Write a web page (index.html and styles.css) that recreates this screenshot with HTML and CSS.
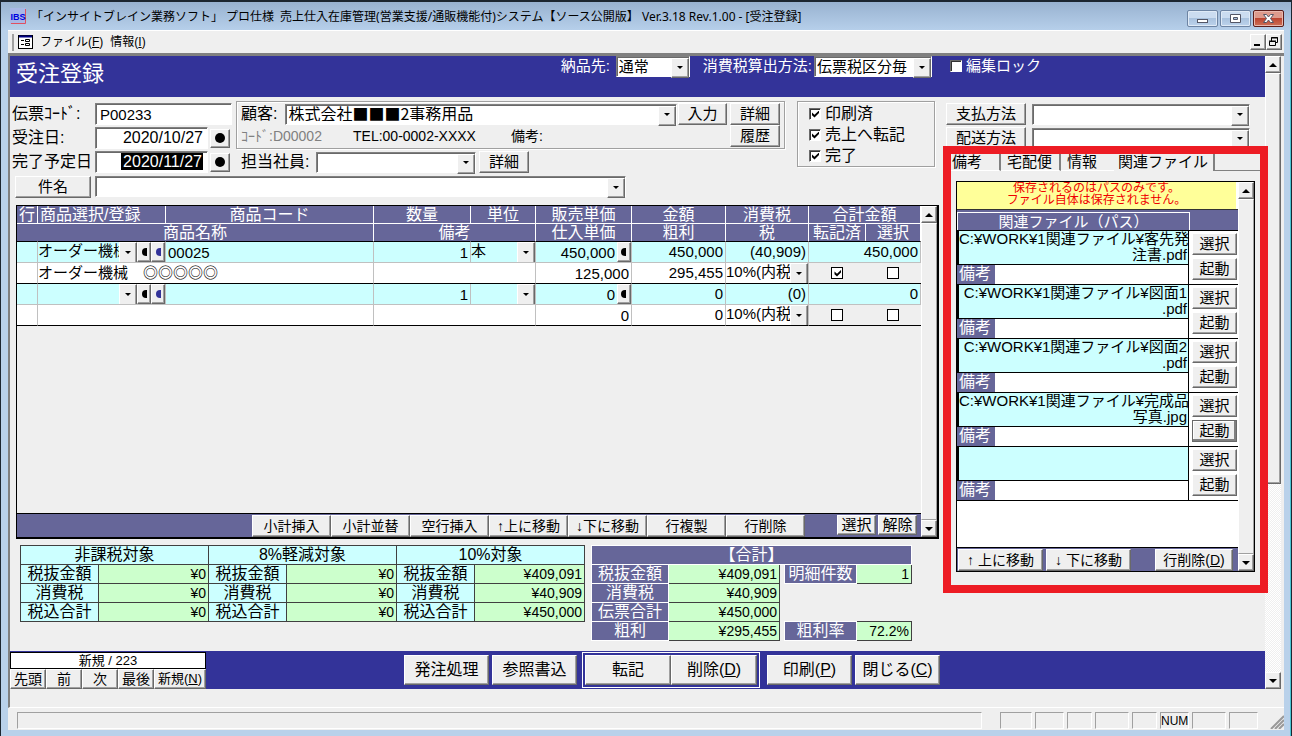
FILE: index.html
```html
<!DOCTYPE html>
<html lang="ja">
<head>
<meta charset="utf-8">
<title>受注登録</title>
<link rel="stylesheet" href="styles.css">
</head>
<body>
<div class="window">
  <header class="titlebar">
    <svg class="logo" viewBox="0 0 16 16" width="16" height="16"><rect width="16" height="16" fill="#a9b8e6"/><path d="M15.500 1v14.500H1" fill="none" stroke="#e05060"/><text x="8" y="12" text-anchor="middle" class="logo-text">IBS</text></svg>
    <span class="title">「インサイトブレイン業務ソフト」 プロ仕様&ensp;売上仕入在庫管理(営業支援/通販機能付)システム【ソース公開版】 Ver.3.18 Rev.1.00 - [受注登録]</span>
    <button class="caption" aria-label="最小化"><svg width="31" height="16" viewBox="0 0 31 16"><rect x="10.500" y="8.500" width="10" height="3" fill="#fff" stroke="#535666"/></svg></button>
    <button class="caption" aria-label="元に戻す"><svg width="31" height="16" viewBox="0 0 31 16"><path d="M10.500 3.500h10v8h-10zM13.500 6.500h4v2h-4z" fill="#fff" fill-rule="evenodd" stroke="#535666"/></svg></button>
    <button class="caption close" aria-label="閉じる"><svg width="31" height="16" viewBox="0 0 31 16"><path d="M10.500 3.500h3l2 2.500 2-2.500h3l-3 4 3 4h-3l-2-2.500-2 2.500h-3l3-4z" fill="#fff" stroke="#535666"/></svg></button>
  </header>

  <div class="client">
    <nav class="menubar">
      <span class="grip"></span>
      <svg width="15" height="14" viewBox="0 0 15 14"><rect x=".5" y=".5" width="14" height="13" fill="#fff" stroke="#000"/><path d="M1 1.500h13" stroke="#000080" stroke-width="2"/><path d="M3 5.500h3M3 9.500h3" stroke="#000"/><path d="M7.500 4.500h4v2h-4zM7.500 8.500h4v2h-4z" fill="none" stroke="#000"/></svg>
      <button class="menu">ファイル(<u>F</u>)</button>
      <button class="menu">情報(<u>I</u>)</button>
      <span class="mdi">
        <button class="btn mdi-btn" aria-label="最小化"><svg width="12" height="12" viewBox="0 0 12 12"><path d="M2 9h6" stroke="#000" stroke-width="2"/></svg></button>
        <button class="btn mdi-btn" aria-label="元に戻す"><svg width="12" height="12" viewBox="0 0 12 12"><path d="M3.500 5V1.500h6v5H8M3 2h7M1.500 5.500h6v4h-6zM1 5h7" fill="none" stroke="#000"/></svg></button>
      </span>
    </nav>

    <div class="form-frame">
      <main class="form">
        <div class="form-head">
          <h1>受注登録</h1>
          <label for="dest">納品先:</label>
          <span class="combo w-dest"><select id="dest"><option>通常</option></select></span>
          <label for="taxcalc">消費税算出方法:</label>
          <span class="combo w-calc"><select id="taxcalc"><option>伝票税区分毎</option></select></span>
          <label class="check lock"><input type="checkbox">編集ロック</label>
        </div>

        <div class="columns">
          <div class="left">
            <section class="top">
              <div class="top-main">
                <div class="ids">
                  <label for="slip">伝票ｺｰﾄﾞ:</label><input class="field wide" id="slip" value="P00233">
                  <label for="odate">受注日:</label><input class="field date" id="odate" value="2020/10/27"><button class="btn dot" aria-label="受注日を選択"></button>
                  <label for="ddate">完了予定日</label><div class="field date"><input class="bare picked" id="ddate" value="2020/11/27" size="10"></div><button class="btn dot" aria-label="完了予定日を選択"></button>
                </div>
                <div class="customer">
                  <div class="group cust-group">
                    <div class="line">
                      <label for="cust">顧客:</label>
                      <span class="combo grow"><select id="cust" class="cjk"><option>株式会社■■■2事務用品</option></select></span>
                      <button class="btn">入力</button>
                    </div>
                    <div class="line small">
                      <span class="dim">ｺｰﾄﾞ:D00002</span><span class="tel">TEL:00-0002-XXXX</span><span>備考:</span>
                    </div>
                    <div class="stack">
                      <button class="btn">詳細</button>
                      <button class="btn">履歴</button>
                    </div>
                  </div>
                  <div class="staff">
                    <label for="staff">担当社員:</label>
                    <span class="combo w-staff"><select id="staff"><option></option></select></span>
                    <button class="btn">詳細</button>
                  </div>
                </div>
                <div class="subject">
                  <button class="btn" id="subj">件名</button>
                  <span class="combo w-subject"><select aria-labelledby="subj"><option></option></select></span>
                </div>
              </div>
              <div class="group flags">
                <label class="check"><input type="checkbox" checked>印刷済</label>
                <label class="check"><input type="checkbox" checked>売上へ転記</label>
                <label class="check"><input type="checkbox" checked>完了</label>
              </div>
            </section>

            <section class="grid">
              <div class="grid-body">
                <div class="rows">
                  <table class="items">
                    <colgroup><col class="c-no"><col class="c-pick"><col><col class="c-qty"><col class="c-unit"><col class="c-price"><col class="c-amt"><col class="c-tax"><col class="c-done"><col class="c-sel"></colgroup>
                    <thead>
                      <tr><th>行</th><th class="start">商品選択/登録</th><th>商品コード</th><th>数量</th><th>単位</th><th>販売単価</th><th>金額</th><th>消費税</th><th colspan="2">合計金額</th></tr>
                      <tr><th colspan="3">商品名称</th><th colspan="2">備考</th><th>仕入単価</th><th>粗利</th><th>税</th><th>転記済</th><th>選択</th></tr>
                    </thead>
                    <tbody>
                      <tr class="main">
                        <td></td>
                        <td><div class="cell"><span class="combo flat grow"><select aria-label="商品選択"><option>オーダー機械</option></select></span><button class="btn half" aria-label="参照"></button><button class="btn half navy" aria-label="登録"></button></div></td>
                        <td><input class="bare" aria-label="商品コード" value="00025"></td>
                        <td><input class="bare num" aria-label="数量" value="1"></td>
                        <td><div class="cell"><span class="combo flat grow"><select aria-label="単位"><option>本</option></select></span></div></td>
                        <td><div class="cell"><input class="bare num" aria-label="販売単価" value="450,000"><button class="btn half" aria-label="単価参照"></button></div></td>
                        <td class="num">450,000</td><td class="num">(40,909)</td><td class="num" colspan="2">450,000</td>
                      </tr>
                      <tr class="sub">
                        <td></td>
                        <td colspan="2"><input class="bare name" aria-label="商品名称" value="オーダー機械　◎◎◎◎◎"></td>
                        <td colspan="2"><input class="bare" aria-label="備考" value=""></td>
                        <td><input class="bare num" aria-label="仕入単価" value="125,000"></td>
                        <td class="num">295,455</td>
                        <td><div class="cell"><span class="combo flat grow"><select aria-label="税"><option>10%(内税)</option></select></span></div></td>
                        <td class="tick"><input type="checkbox" aria-label="転記済" checked></td><td class="tick"><input type="checkbox" aria-label="選択"></td>
                      </tr>
                      <tr class="main">
                        <td></td>
                        <td><div class="cell"><span class="combo flat grow"><select aria-label="商品選択"><option></option></select></span><button class="btn half" aria-label="参照"></button><button class="btn half navy" aria-label="登録"></button></div></td>
                        <td><input class="bare" aria-label="商品コード" value=""></td>
                        <td><input class="bare num" aria-label="数量" value="1"></td>
                        <td><div class="cell"><span class="combo flat grow"><select aria-label="単位"><option></option></select></span></div></td>
                        <td><div class="cell"><input class="bare num" aria-label="販売単価" value="0"><button class="btn half" aria-label="単価参照"></button></div></td>
                        <td class="num">0</td><td class="num">(0)</td><td class="num" colspan="2">0</td>
                      </tr>
                      <tr class="sub">
                        <td></td>
                        <td colspan="2"><input class="bare name" aria-label="商品名称" value=""></td>
                        <td colspan="2"><input class="bare" aria-label="備考" value=""></td>
                        <td><input class="bare num" aria-label="仕入単価" value="0"></td>
                        <td class="num">0</td>
                        <td><div class="cell"><span class="combo flat grow"><select aria-label="税"><option>10%(内税)</option></select></span></div></td>
                        <td class="tick"><input type="checkbox" aria-label="転記済"></td><td class="tick"><input type="checkbox" aria-label="選択"></td>
                      </tr>
                    </tbody>
                  </table>
                </div>
                <div class="grid-foot">
                  <div class="row-actions">
                    <button class="btn">小計挿入</button><button class="btn">小計並替</button><button class="btn">空行挿入</button><button class="btn">↑上に移動</button><button class="btn">↓下に移動</button><button class="btn">行複製</button><button class="btn">行削除</button>
                  </div>
                  <div class="sel-actions"><button class="btn">選択</button><button class="btn">解除</button></div>
                </div>
              </div>
              <div class="scroll"><button class="btn arrow up" aria-label="上へ"></button><span class="thumb"></span><button class="btn arrow down" aria-label="下へ"></button></div>
            </section>

            <section class="sums">
              <table class="taxes">
                <colgroup><col class="x-label"><col><col class="x-label"><col><col class="x-label"><col></colgroup>
                <thead><tr><th colspan="2">非課税対象</th><th colspan="2">8%軽減対象</th><th colspan="2">10%対象</th></tr></thead>
                <tbody>
                  <tr><th>税抜金額</th><td>¥0</td><th>税抜金額</th><td>¥0</td><th>税抜金額</th><td>¥409,091</td></tr>
                  <tr><th>消費税</th><td>¥0</td><th>消費税</th><td>¥0</td><th>消費税</th><td>¥40,909</td></tr>
                  <tr><th>税込合計</th><td>¥0</td><th>税込合計</th><td>¥0</td><th>税込合計</th><td>¥450,000</td></tr>
                </tbody>
              </table>
              <table class="total">
                <colgroup><col class="t-label"><col class="t-val"><col class="t-gap"><col class="t-label2"><col class="t-val2"></colgroup>
                <thead><tr><th colspan="5">【合計】</th></tr></thead>
                <tbody>
                  <tr><th>税抜金額</th><td>¥409,091</td><td class="none"></td><th>明細件数</th><td>1</td></tr>
                  <tr><th>消費税</th><td>¥40,909</td><td class="none" colspan="3"></td></tr>
                  <tr><th>伝票合計</th><td>¥450,000</td><td class="none" colspan="3"></td></tr>
                  <tr><th>粗利</th><td>¥295,455</td><td class="none"></td><th>粗利率</th><td>72.2%</td></tr>
                </tbody>
              </table>
            </section>
          </div>

          <aside class="right">
            <div class="methods">
              <button class="btn" id="pay">支払方法</button><span class="combo"><select aria-labelledby="pay"><option></option></select></span>
              <button class="btn" id="ship">配送方法</button><span class="combo"><select aria-labelledby="ship"><option></option></select></span>
            </div>
            <div class="marked">
              <div class="tabs" role="tablist">
                <button role="tab" class="tab">備考</button><button role="tab" class="tab t2">宅配便</button><button role="tab" class="tab t3">情報</button><button role="tab" class="tab active" aria-selected="true">関連ファイル</button><span class="tab-rest"></span>
              </div>
              <div class="files">
                <div class="files-body">
                  <p class="notice">保存されるのはパスのみです。<br>ファイル自体は保存されません。</p>
                  <div class="files-head"><span>関連ファイル（パス）</span></div>
                  <div class="file"><div class="path">C:¥WORK¥1関連ファイル¥客先発<br>注書.pdf</div><label class="memo">備考<input></label><div class="ops"><button class="btn">選択</button><button class="btn">起動</button></div></div>
                  <div class="file"><div class="path">C:¥WORK¥1関連ファイル¥図面1<br>.pdf</div><label class="memo">備考<input></label><div class="ops"><button class="btn">選択</button><button class="btn">起動</button></div></div>
                  <div class="file"><div class="path">C:¥WORK¥1関連ファイル¥図面2<br>.pdf</div><label class="memo">備考<input></label><div class="ops"><button class="btn">選択</button><button class="btn">起動</button></div></div>
                  <div class="file"><div class="path">C:¥WORK¥1関連ファイル¥完成品<br>写真.jpg</div><label class="memo">備考<input></label><div class="ops"><button class="btn">選択</button><button class="btn default">起動</button></div></div>
                  <div class="file"><div class="path"></div><label class="memo">備考<input></label><div class="ops"><button class="btn">選択</button><button class="btn">起動</button></div></div>
                  <div class="files-foot"><button class="btn">↑ 上に移動</button><button class="btn">↓ 下に移動</button><button class="btn del">行削除(<u>D</u>)</button></div>
                </div>
                <div class="scroll"><button class="btn arrow up" aria-label="上へ"></button><span class="thumb"></span><button class="btn arrow down" aria-label="下へ"></button></div>
              </div>
            </div>
          </aside>
        </div>

        <div class="actionbar">
          <div class="nav">
            <div class="pos">新規 / 223</div>
            <div class="nav-btns"><button class="btn">先頭</button><button class="btn">前</button><button class="btn">次</button><button class="btn">最後</button><button class="btn new">新規(<u>N</u>)</button></div>
          </div>
          <div class="commands">
            <button class="btn">発注処理</button><button class="btn">参照書込</button>
            <div class="pair"><button class="btn">転記</button><button class="btn">削除(<u>D</u>)</button></div>
            <button class="btn">印刷(<u>P</u>)</button><button class="btn">閉じる(<u>C</u>)</button>
          </div>
        </div>
      </main>
      <div class="scroll outer"><button class="btn arrow up" aria-label="上へ"></button><span class="thumb"></span><span class="track"></span><button class="btn arrow down" aria-label="下へ"></button></div>
    </div>

    <footer class="status">
      <span class="msg"></span><span class="s32"></span><span class="s29"></span><span class="s25"></span><span class="s34"></span><span class="s25"></span><span class="s29">NUM</span><span class="s34"></span><span class="s29"></span>
      <svg width="14" height="15" viewBox="0 0 14 15"><path d="M1 15L14 2M5 15L14 6M9 15L14 10" stroke="#999" stroke-width="2"/></svg>
    </footer>
  </div>
</div>
</body>
</html>
```

FILE: styles.css
```css
* { box-sizing: border-box; }
body, button, input, select {
  font-family: "Liberation Sans", "Noto Sans CJK JP", sans-serif;
  font-size: 15px;
  color: #000;
}
body { margin: 0; line-height: 16px; white-space: nowrap; }
button, input, select { margin: 0; padding: 0; border-radius: 0; line-height: 16px; }
h1, p { margin: 0; font-weight: normal; }
th { font-weight: normal; }
label { font-size: 16px; }

/* window chrome */
.window {
  display: flex;
  flex-direction: column;
  min-width: 1292px;
  min-height: 100vh;
  padding: 0 7px 7px;
  background: #b9d1ea;
  border: 1px solid #1c2630;
  border-top-width: 2px;
  box-shadow: inset -1px -1px #4ac5d2;
}
.titlebar {
  display: flex;
  height: 28px;
  gap: 2px;
  margin: 0 -7px;
  padding: 0 7px 0 9px;
  align-items: center;
  background: linear-gradient(#98b2d0, #b6cfea);
}
.title { flex: 1; padding: 2px 0 0 3px; font: 12px/16px "Noto Sans", "Noto Sans CJK JP", sans-serif; }
.logo-text { font: bold 9px "Liberation Sans", sans-serif; fill: #0000e0; }
.caption {
  width: 31px;
  height: 17px;
  margin-top: 4px;
  border: 1px solid #6d84a3;
  border-radius: 2px;
  background: linear-gradient(#cbdcf0 45%, #a9c2de 50%, #bdd3ec);
  box-shadow: inset 0 0 0 1px #dfeaf6;
  overflow: hidden;
}
.caption svg { display: block; margin-left: -1px; }
.close { border-color: #5b1d1a; background: linear-gradient(#dd9a8c 45%, #bc4531 50%, #cd7058); box-shadow: inset 0 0 0 1px #e8b8ae; }
.client { flex: 1; display: flex; flex-direction: column; background: #efefef; }
.menubar { display: flex; align-items: center; height: 23px; padding: 0 2px 0 4px; border-top: 1px solid #fff; }
.grip { width: 2px; height: 17px; margin-right: 4px; background: #a0a0a0; }
.menu { margin-left: 7px; border: 0; background: none; font-size: 12px; }
.mdi { display: flex; margin-left: auto; }
.mdi-btn { width: 16px; height: 16px; display: flex; align-items: center; justify-content: center; }

/* shared controls */
.btn {
  border: 1px solid;
  border-color: #fff #696969 #696969 #fff;
  box-shadow: inset -1px -1px #a0a0a0;
  background: #efefef;
  white-space: nowrap;
}
.btn.default { outline: 1px solid #696969; outline-offset: -1px; box-shadow: inset -2px -2px #808080, inset 1px 1px #fff; }
.combo {
  position: relative;
  display: block;
  height: 21px;
  background: #fff;
  border: 1px solid;
  border-color: #808080 #fff #fff #808080;
  box-shadow: inset 1px 1px #696969;
}
.combo select {
  appearance: none;
  display: block;
  width: 100%;
  height: 100%;
  padding: 0 18px 0 2px;
  border: 0;
  background: none;
  font-size: 15px;
}
.combo .cjk { font: 16px/16px "Noto Sans CJK JP", sans-serif; padding-bottom: 3px; }
.combo::before {
  content: "";
  position: absolute;
  top: 1px;
  right: 0;
  width: 16px;
  height: calc(100% - 1px);
  border: 1px solid;
  border-color: #fff #696969 #696969 #fff;
  box-shadow: inset -1px -1px #a0a0a0;
  background: #efefef;
  pointer-events: none;
}
.combo::after {
  content: "";
  position: absolute;
  top: calc(50% - 1px);
  right: 6px;
  border: 3px solid transparent;
  border-top-color: #000;
  border-bottom: 0;
  pointer-events: none;
}
.flat { border: 0; box-shadow: none; background: none; height: 20px; }
.flat::before { top: 0; height: 100%; }
.flat select { padding-left: 0; padding-bottom: 2px; }
.grow { flex: 1; min-width: 0; }
.field {
  height: 22px;
  padding: 1px 4px;
  background: #fff;
  border: 1px solid;
  border-color: #808080 #fff #fff #808080;
  box-shadow: inset 1px 1px #696969;
}
.bare { border: 0; background: none; width: 100%; height: 20px; padding: 0 2px; }
.bare.name { padding: 0 0 3px; }
.check { display: flex; align-items: center; gap: 4px; }
input[type="checkbox"] {
  appearance: none;
  position: relative;
  width: 12px;
  height: 12px;
  background: #fff;
  border: 1px solid;
  border-color: #696969 #fff #fff #696969;
  box-shadow: inset 1px 1px #333;
}
input[type="checkbox"]:checked::before {
  content: "";
  position: absolute;
  inset: 2px 1px 1px 2px;
  background: #000;
  clip-path: polygon(0 30%, 36% 62%, 100% 0, 100% 36%, 36% 100%, 0 68%);
}
.group { border: 1px solid #a0a0a0; box-shadow: inset 1px 1px #fff, 1px 1px #fff; }

/* scroll bars */
.scroll { display: flex; flex-direction: column; width: 16px; background: #efefef; }
.arrow { display: flex; width: 16px; height: 17px; align-items: center; justify-content: center; }
.arrow::before { content: ""; border: 4px solid transparent; }
.up::before { border-bottom-color: #000; border-top: 0; }
.down::before { border-top-color: #000; border-bottom: 0; }
.thumb { flex: 1; border: 1px solid; border-color: #fff #a0a0a0 #a0a0a0 #fff; }
.outer .thumb { flex: 411; border-color: #fff #696969 #696969 #fff; box-shadow: inset -1px -1px #a0a0a0; }
.outer .track { flex: 189; background: repeating-conic-gradient(#fff 0 25%, #efefef 0 50%) 0 0 / 2px 2px; }
.outer { margin-bottom: 18px; }

/* form frame */
.form-frame {
  flex: 1;
  display: flex;
  padding-right: 3px;
  border-left: 2px solid #808080;
  border-top: 3px solid #808080;
  border-bottom: 1px solid #fff;
}
.form { flex: 1; display: flex; flex-direction: column; padding-bottom: 18px; min-width: 0; }
.form-head {
  display: flex;
  height: 41px;
  padding: 0 226px 0 6px;
  align-items: flex-start;
  background: #333399;
  color: #fff;
}
.form-head label { font-size: 15px; line-height: 20px; }
h1 { font-size: 22px; line-height: 36px; margin-right: auto; }
.w-dest { width: 74px; margin: 0 13px 0 6px; }
.w-calc { width: 118px; margin: 0 18px 0 2px; }
.form-head .check { gap: 4px; margin-right: -2px; }
.columns { flex: 1; display: flex; }
.left { flex: 1; display: flex; flex-direction: column; padding: 4px 4px 10px 6px; min-width: 0; }
.right { width: 322px; display: flex; flex-direction: column; padding: 6px 0 58px; }

/* order header */
.top { display: flex; align-items: flex-start; gap: 12px; height: 104px; margin-left: -4px; }
.top-main { flex: 1; display: grid; grid-template-columns: 224px 1fr; row-gap: 2px; }
.ids { display: grid; grid-template-columns: 83px 113px 20px; row-gap: 2px; padding-top: 2px; align-items: center; }
.wide { grid-column: 2 / 4; width: 137px; }
.date { font-size: 16px; text-align: right; width: 113px; }
.picked { width: 82px; height: 17px; padding: 0 1px; background: #000; color: #fff; text-align: right; font-size: 16px; }
.dot { width: 20px; height: 19px; margin-left: 2px; display: flex; align-items: center; justify-content: center; }
.dot::before { content: ""; width: 10px; height: 10px; border-radius: 50%; background: #000; }
.cust-group { display: grid; grid-template-columns: 1fr 50px; grid-template-rows: 22px 22px; column-gap: 3px; height: 48px; padding: 1px 4px 0 4px; }
.line { display: flex; align-items: center; }
.line .grow { margin-left: 8px; }
.line .btn { width: 49px; height: 22px; margin-left: 1px; }
.small { font-size: 14px; }
.dim { color: #808080; width: 112px; }
.tel { width: 158px; }
.stack { grid-area: 1 / 2 / 3 / 3; display: grid; grid-template-rows: 22px 22px; }
.staff { display: flex; align-items: center; margin-top: 2px; padding-left: 5px; height: 22px; }
.w-staff { width: 160px; margin-right: 3px; }
.staff label { width: 75px; }
.staff .btn { width: 50px; height: 22px; }
.subject { grid-column: 1 / 3; display: flex; gap: 4px; margin: 1px 0 0 3px; }
.subject .btn { width: 76px; height: 22px; }
.w-subject { flex: 0 0 69%; }
.flags { width: 138px; height: 66px; margin-right: 4px; padding: 1px 11px; display: grid; grid-template-rows: repeat(3, 21px); }

/* item grid */
.grid { flex: 1; display: flex; min-height: 334px; border: 1px solid #000; border-right-width: 2px; border-bottom-width: 2px; }
.grid-body { flex: 1; display: flex; flex-direction: column; min-width: 0; }
.rows { flex: 1; }
.items { width: 100%; table-layout: fixed; border-collapse: separate; border-spacing: 0; }
.c-no { width: 21px; } .c-pick { width: 128px; } .c-qty { width: 97px; } .c-unit { width: 65px; }
.c-price { width: 96px; } .c-amt { width: 94px; } .c-tax { width: 83px; } .c-done { width: 57px; } .c-sel { width: 55px; }
.items th { height: 18px; padding: 0; background: #666699; color: #fff; font-size: 16px; line-height: 17px; border-right: 1px solid #fff; border-bottom: 1px solid #fff; overflow: hidden; }
.items tr:nth-child(2) th { height: 17px; border-bottom: 0; }
.items tbody tr:first-child td { border-top: 1px solid #000; }
.items .start { text-align: left; padding-left: 2px; }
.items td { height: 21px; padding: 0; border-right: 1px solid #c0c0c0; border-bottom: 1px solid #c0c0c0; overflow: hidden; }
.items td.num { padding-right: 2px; }
.items .sub td { border-bottom-color: #000; background: #fff; }
.items .sub .tick { background: #efefef; border-right: 0; text-align: center; line-height: 12px; }
.tick input { border-color: #000; box-shadow: none; }
.items .main td { background: #ccffff; }
.num { text-align: right; font-size: 15px; }
.cell { display: flex; height: 20px; align-items: center; }
.cell .half { flex: none; width: 14px; height: 20px; display: flex; align-items: center; justify-content: center; }
.half::before { content: ""; width: 5px; height: 8px; border-radius: 5px 0 0 5px; background: #000; }
.navy::before { background: #333399; }
.grid-foot { display: flex; height: 24px; padding: 1px 4px 0 0; background: #666699; border-top: 1px solid #000; }
.row-actions { display: flex; margin-left: auto; }
.row-actions .btn { width: 79px; height: 22px; font-size: 14px; }
.sel-actions { display: flex; gap: 2px; margin-left: 32px; }
.sel-actions .btn { width: 39px; height: 20px; }

/* totals */
.sums { display: flex; gap: 6px; height: 96px; margin: 6px 0 0 4px; align-items: flex-start; }
.sums table { border-collapse: collapse; table-layout: fixed; }
.sums th, .sums td { height: 19px; padding: 0; font-size: 16px; line-height: 16px; border: 1px solid #404040; overflow: hidden; }
.sums td { padding-right: 2px; text-align: right; font-size: 14px; background: #ccffcc; }
.taxes { width: 565px; }
.taxes th { background: #ccffff; }
.x-label { width: 78px; }
.total { width: 321px; }
.sums .total th { background: #666699; color: #fff; border-color: #fff; }
.sums .total .none { border: 0; background: none; }
.t-label { width: 77px; } .t-val { width: 111px; } .t-gap { width: 5px; } .t-label2 { width: 72px; }

/* right side */
.methods { display: grid; grid-template-columns: 80px 1fr; gap: 2px 6px; padding: 0 15px 0 3px; height: 43px; align-items: center; }
.methods .btn { height: 22px; }
.marked { position: relative; z-index: 1; flex: 1; display: flex; flex-direction: column; margin-right: -3px; padding-bottom: 13px; border: 8px solid #ed1c24; background: #efefef; }
.tabs { display: flex; height: 17px; }
.tab { width: 50px; padding: 0 0 4px 1px; border: 0; border-right: 2px solid #808080; border-bottom: 1px solid #fff; background: none; text-align: left; overflow: hidden; }
.t2 { width: 60px; padding-left: 6px; }
.t3 { width: 53px; padding-left: 6px; border-right: 0; }
.tab.active { width: 101px; padding: 0 2px 6px 4px; border-bottom: 0; }
.tab-rest { flex: 1; border-bottom: 1px solid #808080; }
.files { flex: 1; display: flex; margin: 10px 5px 0; border: 1px solid #000; background: #fff; }
.files-body { flex: 1; display: flex; flex-direction: column; }
.notice { height: 27px; margin-right: 2px; background: #ffff99; color: #f00000; text-align: center; font-size: 12px; line-height: 12px; }
.files-head { height: 21px; padding-top: 2px; border-top: 1px solid #333; background: #666699; color: #fff; }
.files-head span { display: block; width: 233px; height: 18px; border: 1px solid #fff; border-bottom: 0; text-align: center; line-height: 17px; }
.file { display: grid; grid-template: 35px 19px / 232px 1fr; }
.path { border: 1px solid #000; border-left-width: 2px; background: #ccffff; text-align: right; font-size: 15px; line-height: 16px; padding-right: 1px; overflow: hidden; }
.memo { grid-row: 2; display: flex; padding-left: 2px; border-right: 1px solid #000; background: #666699; color: #fff; line-height: 18px; }
.memo input { flex: 1; min-width: 0; margin-left: 4px; border: 0; background: #fff; }
.ops { grid-area: 1 / 2 / 3 / 3; display: grid; grid-template-rows: 22px 22px; gap: 3px; padding: 2px 1px 0 3px; border-top: 1px solid #000; }
.files-foot { display: flex; gap: 3px; height: 24px; margin-top: auto; padding: 1px 5px 0 1px; border-top: 1px solid #000; background: #666699; }
.files-foot .btn { width: 85px; height: 22px; font-size: 14px; }
.files-foot .del { width: 78px; margin-left: auto; }
.file:nth-last-child(2) { border-bottom: 1px solid #000; }

/* action bar */
.actionbar { display: flex; height: 38px; background: #333399; }
.nav { width: 196px; }
.pos { height: 17px; border: 1px solid #000; background: #fff; text-align: center; font-size: 13px; line-height: 15px; margin-top: 1px; }
.nav-btns { display: flex; }
.nav-btns .btn { width: 36px; height: 20px; font-size: 14px; }
.nav-btns .new { flex: 1; font-size: 13px; }
.commands { display: flex; gap: 3px; margin: 0 auto; padding: 4px 127px 0 0; align-items: flex-start; }
.commands .btn { width: 85px; height: 30px; font-size: 16px; }
.pair { display: flex; margin: -3px 4px 0 2px; padding: 2px; border: 1px solid #fff; }
.pair .btn { width: 86px; }

/* status bar */
.status { display: flex; gap: 3px; height: 22px; padding: 4px 0 1px 9px; align-items: stretch; font-size: 12px; }
.status span { border: 1px solid; border-color: #a0a0a0 #fff #fff #a0a0a0; text-align: center; }
.msg { flex: 1; margin-right: 15px; }
.status .s25 { width: 25px; } .status .s29 { width: 29px; } .status .s32 { width: 32px; } .status .s34 { width: 34px; }
.status svg { margin: 2px 0 0 9px; }
```
